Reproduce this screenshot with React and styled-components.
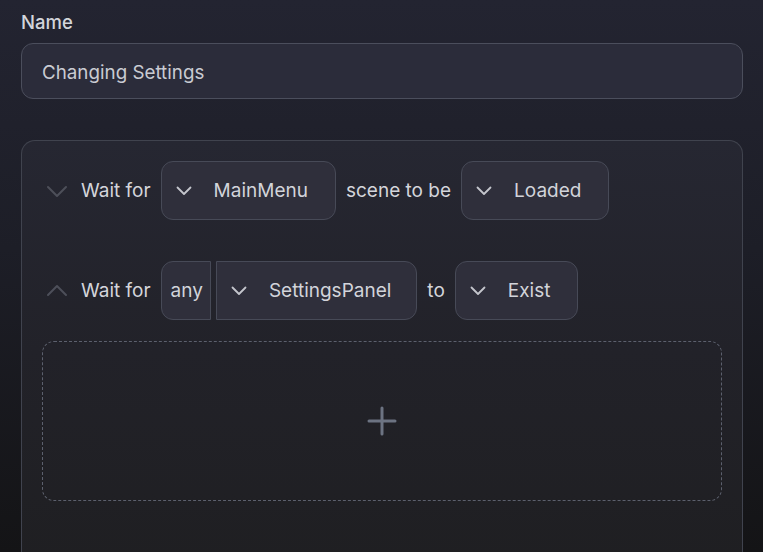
import React from "react";
import styled, { createGlobalStyle } from "styled-components";

const Global = createGlobalStyle`
  html, body { margin: 0; padding: 0; }
  body {
    width: 763px;
    height: 552px;
    overflow: hidden;
    background: linear-gradient(180deg, #232431 0%, #1d1e27 45%, #141416 100%);
    font-family: "Inter", "Lato", sans-serif;
    color: #d4d5db;
  }
`;

const Page = styled.div`
  padding: 10px 20px 0 21px;
  display: flex;
  flex-direction: column;
`;

const Label = styled.label`
  font-size: 18.5px;
  font-weight: 500;
  line-height: 24px;
  color: #d3d5db;
  margin-bottom: 9px;
`;

const Input = styled.div`
  border: 1px solid #4b4e5c;
  border-radius: 12px;
  background: #2b2c3a;
  display: flex;
  align-items: center;
  padding: 3px 0 0 20px;
  height: 51px;
  font-size: 18.8px;
  color: #c9cbd2;
`;

const Card = styled.div`
  margin-top: 41px;
  border: 1px solid #40434e;
  border-bottom: none;
  border-radius: 14px 14px 0 0;
  background: linear-gradient(180deg, #262732 0%, #222229 50%, #1f1f22 100%);
  padding: 20px 20px 60px 20px;
  display: flex;
  flex-direction: column;
`;

const Row = styled.div`
  display: flex;
  align-items: center;
  height: 59px;
  margin-bottom: ${(p) => p.$gap || 0}px;
`;

const Toggle = styled.span`
  width: 30px;
  display: flex;
  justify-content: center;
  color: #4d4f59;
  margin-right: 9px;
`;

const Word = styled.span`
  font-size: 19px;
  color: #d4d5db;
  margin: 0 10px 0 0;
  white-space: nowrap;
`;

const Select = styled.div`
  height: 57px;
  border: 1px solid #474a57;
  background: #2f2f3b;
  display: flex;
  align-items: center;
  padding: 0 ${(p) => p.$pr ?? 27}px 0 ${(p) => p.$pl ?? 14}px;
  border-radius: ${(p) =>
    p.$side === "left" ? "12px 0 0 12px" : p.$side === "right" ? "0 12px 12px 0" : "12px"};
  margin-right: ${(p) => p.$mr ?? 10}px;
  font-size: 19px;
  color: #d2d4da;
  white-space: nowrap;
`;

const Chevron = styled.svg`
  width: 16px;
  height: 10px;
  margin-right: 22px;
  color: #c4c6cc;
`;

const Drop = styled.div`
  height: 158px;
  border: 1px dashed #5c606d;
  border-radius: 12px;
  margin-top: 21px;
  display: flex;
  align-items: center;
  justify-content: center;
  color: #6c7382;
`;

const Down = ({ size = 20 }) => (
  <svg width={size} height={size} viewBox="0 0 24 24" fill="none" stroke="currentColor" strokeWidth="2" strokeLinecap="round" strokeLinejoin="round">
    <path d="m3 8 9 9 9-9" />
  </svg>
);
const Up = ({ size = 20 }) => (
  <svg width={size} height={size} viewBox="0 0 24 24" fill="none" stroke="currentColor" strokeWidth="2" strokeLinecap="round" strokeLinejoin="round">
    <path d="m3 16 9-9 9 9" />
  </svg>
);

const ChevronIcon = () => (
  <Chevron viewBox="0 0 16 10" fill="none" stroke="currentColor" strokeWidth="1.8" strokeLinecap="round" strokeLinejoin="round">
    <path d="M1.5 1.5 8 8l6.5-6.5" />
  </Chevron>
);

export default function App() {
  return (
    <>
      <Global />
      <Page>
        <Label>Name</Label>
        <Input>Changing Settings</Input>
        <Card>
          <Row $gap={41}>
            <Toggle><Down size={24} /></Toggle>
            <Word>Wait for</Word>
            <Select>
              <ChevronIcon />
              MainMenu
            </Select>
            <Word>scene to be</Word>
            <Select>
              <ChevronIcon />
              Loaded
            </Select>
          </Row>
          <Row>
            <Toggle><Up size={24} /></Toggle>
            <Word>Wait for</Word>
            <Select $side="left" $pl={9} $pr={7} $mr={5}>
              any
            </Select>
            <Select $side="right" $pr={25}>
              <ChevronIcon />
              SettingsPanel
            </Select>
            <Word>to</Word>
            <Select>
              <ChevronIcon />
              Exist
            </Select>
          </Row>
          <Drop>
            <svg width="30" height="30" viewBox="0 0 30 30" fill="none" stroke="currentColor" strokeWidth="3" strokeLinecap="round">
              <path d="M15 2v26M2 15h26" />
            </svg>
          </Drop>
        </Card>
      </Page>
    </>
  );
}
